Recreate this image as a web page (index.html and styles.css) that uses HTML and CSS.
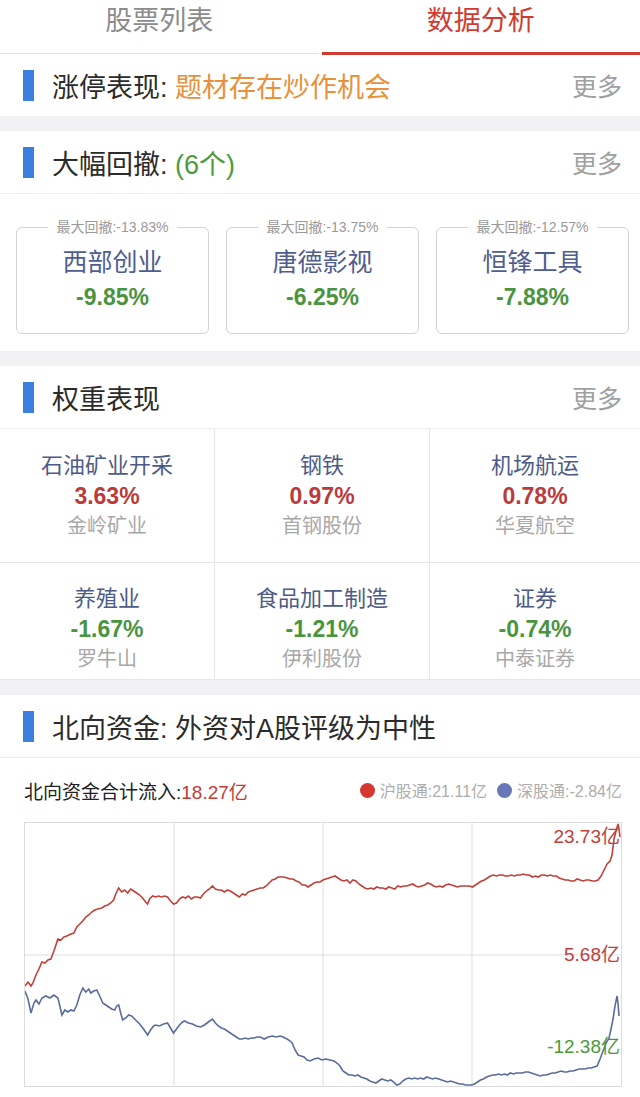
FILE: index.html
```html
<!DOCTYPE html>
<html lang="zh-CN">
<head>
    <meta charset="UTF-8">
    <meta name="viewport" content="width=device-width, initial-scale=1.0">
    <title>数据分析</title>
    <link rel="stylesheet" href="styles.css">
</head>
<body>
    <nav class="tabs">
        <a class="tab">股票列表</a>
        <a class="tab active">数据分析</a>
    </nav>

    <section class="block">
        <div class="head">
            <span class="bar"></span>
            <h2 class="title">涨停表现: <span class="orange">题材存在炒作机会</span></h2>
            <a class="more">更多</a>
        </div>
    </section>

    <section class="block">
        <div class="head line">
            <span class="bar"></span>
            <h2 class="title">大幅回撤: <span class="green">(6个)</span></h2>
            <a class="more">更多</a>
        </div>
        <div class="cards">
            <fieldset class="card">
                <legend>最大回撤:-13.83%</legend>
                <div class="card-name">西部创业</div>
                <div class="card-value">-9.85%</div>
            </fieldset>
            <fieldset class="card">
                <legend>最大回撤:-13.75%</legend>
                <div class="card-name">唐德影视</div>
                <div class="card-value">-6.25%</div>
            </fieldset>
            <fieldset class="card">
                <legend>最大回撤:-12.57%</legend>
                <div class="card-name">恒锋工具</div>
                <div class="card-value">-7.88%</div>
            </fieldset>
        </div>
    </section>

    <section class="block">
        <div class="head line">
            <span class="bar"></span>
            <h2 class="title">权重表现</h2>
            <a class="more">更多</a>
        </div>
        <div class="weights">
            <div class="cell">
                <div class="cell-name">石油矿业开采</div>
                <div class="cell-value up">3.63%</div>
                <div class="cell-stock">金岭矿业</div>
            </div>
            <div class="cell">
                <div class="cell-name">钢铁</div>
                <div class="cell-value up">0.97%</div>
                <div class="cell-stock">首钢股份</div>
            </div>
            <div class="cell">
                <div class="cell-name">机场航运</div>
                <div class="cell-value up">0.78%</div>
                <div class="cell-stock">华夏航空</div>
            </div>
            <div class="cell low">
                <div class="cell-name">养殖业</div>
                <div class="cell-value down">-1.67%</div>
                <div class="cell-stock">罗牛山</div>
            </div>
            <div class="cell low">
                <div class="cell-name">食品加工制造</div>
                <div class="cell-value down">-1.21%</div>
                <div class="cell-stock">伊利股份</div>
            </div>
            <div class="cell low">
                <div class="cell-name">证券</div>
                <div class="cell-value down">-0.74%</div>
                <div class="cell-stock">中泰证券</div>
            </div>
        </div>
    </section>

    <section class="block last">
        <div class="head line">
            <span class="bar"></span>
            <h2 class="title">北向资金: 外资对A股评级为中性</h2>
        </div>
        <div class="flow">
            <div class="flow-total">北向资金合计流入:<span class="red">18.27亿</span></div>
            <div class="legend">
                <span class="dot dot-red"></span>沪股通:21.11亿
                <span class="dot dot-blue"></span>深股通:-2.84亿
            </div>
        </div>
        <div class="chart">
            <svg class="chart-svg" viewBox="0 0 598 263" preserveAspectRatio="none">
                <line x1="149.5" y1="0" x2="149.5" y2="263" class="grid"/>
                <line x1="299" y1="0" x2="299" y2="263" class="grid"/>
                <line x1="448.5" y1="0" x2="448.5" y2="263" class="grid"/>
                <line x1="0" y1="132" x2="598" y2="132" class="grid"/>
                <polyline class="line-red" points="0,163 3,159 6,163 8,160 11,152 14,146 17,139 20,140 23,137 26,136 29,128 31,122 33,116 36,117 39,114 42,113 46,111 49,110 52,104 55,101 58,98 61,94 64,92 67,89 70,87 73,86 77,85 80,83 83,82 86,80 89,77 91,71 94,65 97,69 100,67 103,70 106,66 109,68 112,70 115,72 118,75 121,79 123,81 125,76 128,73 131,74 134,73 137,74 140,73 143,74 146,78 149,81 152,80 155,76 158,74 161,75 164,73 167,76 170,74 173,74 176,75 179,71 182,68 185,66 188,63 191,66 194,67 197,67 200,69 203,67 206,68 209,70 212,72 215,74 218,71 221,72 224,69 227,68 230,67 233,66 236,65 239,65 242,63 245,60 248,57 251,56 254,54 257,54 260,54 263,55 266,56 269,56 272,58 275,59 278,62 281,62 284,64 287,62 290,60 293,59 296,59 299,57 302,56 305,55 308,54 311,53 314,55 317,57 320,58 323,57 326,60 329,57 332,58 335,61 338,63 341,65 344,66 347,65 350,66 353,64 356,65 359,65 362,66 365,64 368,65 371,66 374,63 377,64 380,63 383,63 386,62 389,61 392,63 395,64 398,63 401,62 404,60 407,61 410,63 413,64 416,63 419,64 422,62 425,61 428,62 431,63 434,64 437,63 440,63 443,63 446,63 449,64 452,62 455,60 458,58 461,57 464,55 467,53 470,52 473,53 476,52 479,52 482,53 485,53 488,52 491,53 494,52 497,52 500,51 503,52 506,52 509,54 512,53 515,54 518,52 521,52 524,53 527,52 530,53 533,53 536,55 539,56 542,57 545,57 548,58 551,58 554,56 557,57 560,58 563,57 566,57 569,58 572,58 575,57 578,53 581,47 584,41 587,38 589,32 591,16 593,8 595,1 596,6 597,14"/>
                <polyline class="line-blue" points="0,168 3,176 6,190 9,180 11,177 14,181 17,175 21,173 25,175 29,172 33,175 35,183 37,192 40,187 43,189 46,187 49,188 52,182 55,172 58,165 61,169 64,166 66,170 69,168 72,167 75,173 78,180 81,182 84,184 87,186 90,187 92,183 94,182 96,190 98,197 101,195 104,192 107,193 111,197 115,201 119,206 123,212 126,207 129,203 131,202 135,203 139,201 143,200 146,205 149,210 152,206 155,202 158,199 160,198 164,200 168,201 172,203 176,204 180,202 184,199 188,196 191,200 194,203 197,205 200,206 203,208 206,210 209,212 212,214 215,216 218,216 221,215 224,216 227,215 230,215 233,214 236,214 240,216 244,214 248,213 252,214 256,213 259,214 263,216 266,218 268,220 271,227 274,232 277,233 280,234 283,237 286,238 290,236 294,235 298,237 302,236 306,237 310,238 313,240 316,243 319,248 322,250 325,252 328,252 331,253 334,252 337,254 340,255 343,256 346,258 349,259 352,260 355,258 358,256 361,257 364,258 367,257 370,259 373,262 376,261 379,258 382,256 385,255 388,256 391,255 394,256 397,255 400,256 403,254 406,255 409,256 412,255 415,256 418,257 421,258 424,259 427,258 430,259 433,260 436,261 439,261 442,262 445,262 448,262 451,261 454,259 457,257 460,256 463,254 466,253 469,252 472,252 475,251 478,252 481,251 484,252 487,250 490,251 493,250 496,250 499,250 502,249 505,249 508,250 511,251 514,252 517,253 520,252 523,252 526,251 529,250 532,250 535,249 538,248 541,249 544,249 547,248 550,248 553,247 556,246 559,246 562,246 565,245 568,245 571,244 574,243 577,236 580,228 583,220 586,215 588,206 590,196 592,183 594,173 595,180 596,193"/>
            </svg>
            <span class="axis-label label-top">23.73亿</span>
            <span class="axis-label label-mid">5.68亿</span>
            <span class="axis-label label-low">-12.38亿</span>
        </div>
        <div class="times">
            <span>09:30</span>
            <span>11:30</span>
            <span>15:00</span>
        </div>
    </section>
</body>
</html>
```

FILE: styles.css
```css
body {
    font-family: 'Liberation Sans', 'Noto Sans CJK SC', sans-serif;
    color: #333333;
    background-color: #f2f2f4;
    margin: 0;
    padding: 0;
}

.tabs {
    display: flex;
    height: 54px;
    background-color: #ffffff;
}

.tab {
    flex: 1;
    text-align: center;
    font-size: 27px;
    line-height: 42px;
    color: #8c8c8c;
    border-bottom: 1px solid #e3e3e3;
    box-sizing: border-box;
}

.tab.active {
    color: #d23a30;
    border-bottom: 3px solid #d23a30;
    height: 55px;
    margin-left: 3px;
}

.block {
    background-color: #ffffff;
    margin-bottom: 15px;
}

.block.last {
    margin-bottom: 0;
    padding-bottom: 20px;
}

.head {
    display: flex;
    align-items: center;
    height: 62px;
    padding: 0 18px 0 23px;
}

.head.line {
    border-bottom: 1px solid #ececec;
}

.bar {
    width: 11px;
    height: 31px;
    background-color: #3b80e0;
    margin-right: 18px;
}

.title {
    flex: 1;
    margin: 0;
    font-size: 27px;
    font-weight: normal;
    color: #2b2b2b;
}

.orange {
    color: #e8913a;
}

.green {
    color: #4a9c40;
}

.red {
    color: #c23b36;
}

.more {
    font-size: 25px;
    color: #a0a0a0;
}

.cards {
    display: flex;
    gap: 17px;
    padding: 25px 11px 17px 16px;
}

.card {
    flex: 1;
    margin: 0;
    padding: 12px 0 21px;
    border: 1px solid #d2d2d2;
    border-radius: 6px;
    text-align: center;
    min-width: 0;
}

.card legend {
    margin: 0 auto;
    padding: 0 8px;
    font-size: 14px;
    line-height: 16px;
    color: #9a9a9a;
}

.card-name {
    font-size: 25px;
    line-height: 30px;
    color: #4f5d8f;
}

.card-value {
    font-size: 23px;
    font-weight: bold;
    line-height: 30px;
    margin-top: 5px;
    color: #4a9440;
}

.weights {
    display: grid;
    grid-template-columns: 215px 215px 1fr;
}

.cell {
    text-align: center;
    padding: 22px 0 21px;
    border-right: 1px solid #e6e6e6;
    border-bottom: 1px solid #e6e6e6;
}

.cell:nth-child(3n) {
    border-right: none;
}

.cell.low {
    padding: 21px 0 5px;
}

.cell-name {
    font-size: 22px;
    line-height: 30px;
    color: #4e5b87;
}

.cell-value {
    font-size: 23px;
    font-weight: bold;
    line-height: 30px;
}

.cell-value.up {
    color: #bb3a3c;
}

.cell-value.down {
    color: #4a9440;
}

.cell-stock {
    font-size: 20px;
    line-height: 30px;
    color: #a8a8a8;
}

.flow {
    display: flex;
    justify-content: space-between;
    align-items: center;
    height: 64px;
    padding: 0 18px 0 24px;
}

.flow-total {
    font-size: 19px;
    color: #222222;
}

.legend {
    display: flex;
    align-items: center;
    font-size: 16px;
    color: #adadad;
}

.dot {
    width: 15px;
    height: 15px;
    border-radius: 50%;
    margin: 0 5px 0 10px;
}

.dot-red {
    background-color: #d4382e;
}

.dot-blue {
    background-color: #6877b6;
}

.chart {
    position: relative;
    height: 263px;
    margin: 0 18px 0 24px;
    border: 1px solid #dcdcdc;
}

.chart-svg {
    display: block;
    width: 100%;
    height: 100%;
}

.grid {
    stroke: #dedede;
    stroke-width: 1;
}

.line-red {
    fill: none;
    stroke: #c0403a;
    stroke-width: 1.6;
}

.line-blue {
    fill: none;
    stroke: #5b6c9c;
    stroke-width: 1.6;
}

.axis-label {
    position: absolute;
    right: 1px;
    font-size: 19px;
    line-height: 22px;
}

.label-top {
    top: 3px;
    color: #c0403a;
}

.label-mid {
    top: 121px;
    color: #c0403a;
}

.label-low {
    top: 213px;
    color: #4a9a3c;
}

.times {
    display: flex;
    justify-content: space-between;
    padding: 9px 18px 0 24px;
    font-size: 16px;
    color: #a0a0a0;
}
```
